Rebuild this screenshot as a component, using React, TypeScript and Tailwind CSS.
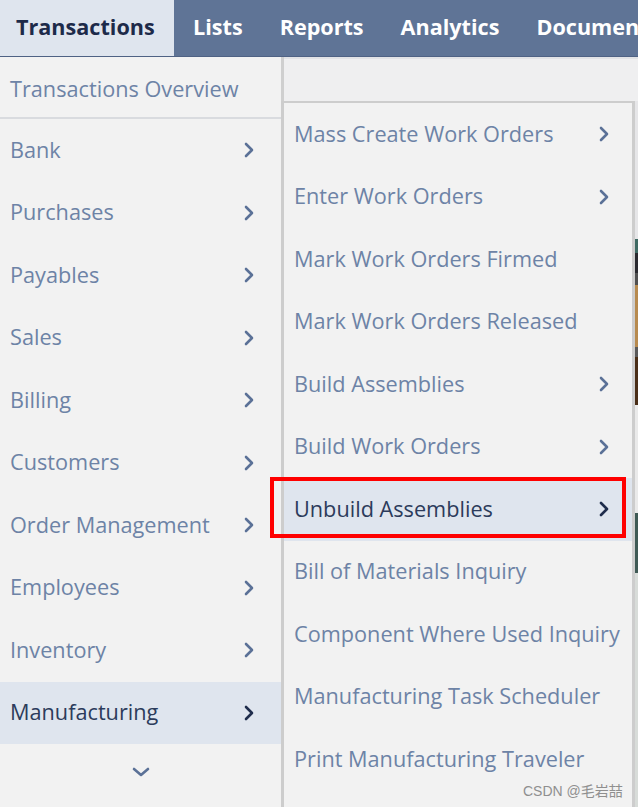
import React from "react";

const Chevron = ({ dark = false }: { dark?: boolean }) => (
  <svg width="12" height="18" viewBox="0 0 12 18" className="shrink-0">
    <polyline
      points="3,3 9,9 3,15"
      fill="none"
      stroke={dark ? "#1f2d4c" : "#5b7197"}
      strokeWidth="2.6"
      strokeLinecap="round"
      strokeLinejoin="round"
    />
  </svg>
);

const leftItems = [
  "Bank",
  "Purchases",
  "Payables",
  "Sales",
  "Billing",
  "Customers",
  "Order Management",
  "Employees",
  "Inventory",
  "Manufacturing",
];

const subItems: { label: string; arrow: boolean }[] = [
  { label: "Mass Create Work Orders", arrow: true },
  { label: "Enter Work Orders", arrow: true },
  { label: "Mark Work Orders Firmed", arrow: false },
  { label: "Mark Work Orders Released", arrow: false },
  { label: "Build Assemblies", arrow: true },
  { label: "Build Work Orders", arrow: true },
  { label: "Unbuild Assemblies", arrow: true },
  { label: "Bill of Materials Inquiry", arrow: false },
  { label: "Component Where Used Inquiry", arrow: false },
  { label: "Manufacturing Task Scheduler", arrow: false },
  { label: "Print Manufacturing Traveler", arrow: false },
];

export default function App() {
  return (
    <div
      className="w-[638px] h-[807px] overflow-hidden flex flex-col bg-[#efeff0] relative"
      style={{ fontFamily: '"Open Sans", "Noto Sans", sans-serif' }}
    >
      {/* Top nav */}
      <div className="h-[57px] shrink-0 flex bg-[#5f7496] text-[21.6px] font-bold text-white border-b border-[#4f6284] overflow-hidden">
        <div className="w-[174px] shrink-0 bg-[#dfe5ee] text-[#1d2a49] flex items-center pl-[16px] pb-[2px]">
          Transactions
        </div>
        <div className="flex items-center pl-[19px] pb-[2px] gap-[37px] whitespace-nowrap">
          <span>Lists</span>
          <span>Reports</span>
          <span>Analytics</span>
          <span>Documents</span>
        </div>
      </div>

      <div className="flex flex-1 min-h-0">
        {/* Left menu */}
        <div className="w-[284px] shrink-0 bg-[#f2f2f2] border-r-[3px] border-[#cfcfcf] flex flex-col text-[21.7px] text-[#6d83a6]">
          <div className="h-[62px] flex items-center pl-[10px] pt-[4px] border-b-2 border-[#d9dbdf] whitespace-nowrap">
            Transactions Overview
          </div>
          {leftItems.map((it) => {
            const active = it === "Manufacturing";
            return (
              <div
                key={it}
                className={
                  active
                    ? "h-[62.5px] flex items-center pl-[10px] pr-[26px] justify-between bg-[#dfe5ee] text-[#2c3b5b]"
                    : "h-[62.5px] flex items-center pl-[10px] pr-[26px] justify-between"
                }
              >
                <span className="whitespace-nowrap">{it}</span>
                <Chevron dark={active} />
              </div>
            );
          })}
          <div className="flex justify-center pt-[22px]">
            <svg width="20" height="12" viewBox="0 0 20 12">
              <polyline
                points="3,3 10,9 17,3"
                fill="none"
                stroke="#5b7197"
                strokeWidth="2.6"
                strokeLinecap="round"
                strokeLinejoin="round"
              />
            </svg>
          </div>
        </div>

        {/* Right area */}
        <div className="flex-1 flex flex-col min-w-0">
          <div className="h-[44px] shrink-0 border-t-2 border-[#e2e3e6]" />
          <div className="flex flex-1 min-h-0 ml-[-3px]">
            <div className="w-[354px] shrink-0 bg-[#f2f2f2] border-l-[3px] border-t-2 border-r-[3px] border-[#cdcdcd] flex flex-col text-[21.7px] text-[#6d83a6]">
              {subItems.map((it) => {
                const active = it.label === "Unbuild Assemblies";
                return (
                  <div
                    key={it.label}
                    className={
                      active
                        ? "h-[62.5px] shrink-0 flex items-center pl-[10px] pr-[22px] justify-between bg-[#dfe5ee] text-[#2c3b5b]"
                        : "h-[62.5px] shrink-0 flex items-center pl-[10px] pr-[22px] justify-between"
                    }
                  >
                    <span className="whitespace-nowrap">{it.label}</span>
                    {it.arrow && <Chevron dark={active} />}
                  </div>
                );
              })}
            </div>
            <div className="flex-1 flex flex-col">
              <div className="h-[138px] bg-[#e6e6e8]" />
              <div className="h-[14px] bg-[#3f6a63]" />
              <div className="h-[20px] bg-[#2a2a30]" />
              <div className="h-[12px] bg-[#505050]" />
              <div className="h-[62px] bg-[#b78a4e]" />
              <div className="h-[10px] bg-[#5a5a5a]" />
              <div className="h-[48px] bg-[#4a2e17]" />
              <div className="h-[108px] bg-[#eaeaea]" />
              <div className="h-[60px] bg-[#3f5a55]" />
              <div className="flex-1 bg-[#d8dcd9]" />
            </div>
          </div>
        </div>
      </div>

      {/* Red highlight */}
      <div className="absolute left-[270px] top-[477px] w-[356px] h-[61px] border-[4px] border-[#ff0000]" />

      {/* Watermark */}
      <div
        className="absolute left-[523px] top-[781px] text-[14px] text-[#8f8f8f]"
        style={{ fontFamily: '"Liberation Sans", "Noto Sans CJK SC", sans-serif' }}
      >
        CSDN @毛岩喆
      </div>
    </div>
  );
}
